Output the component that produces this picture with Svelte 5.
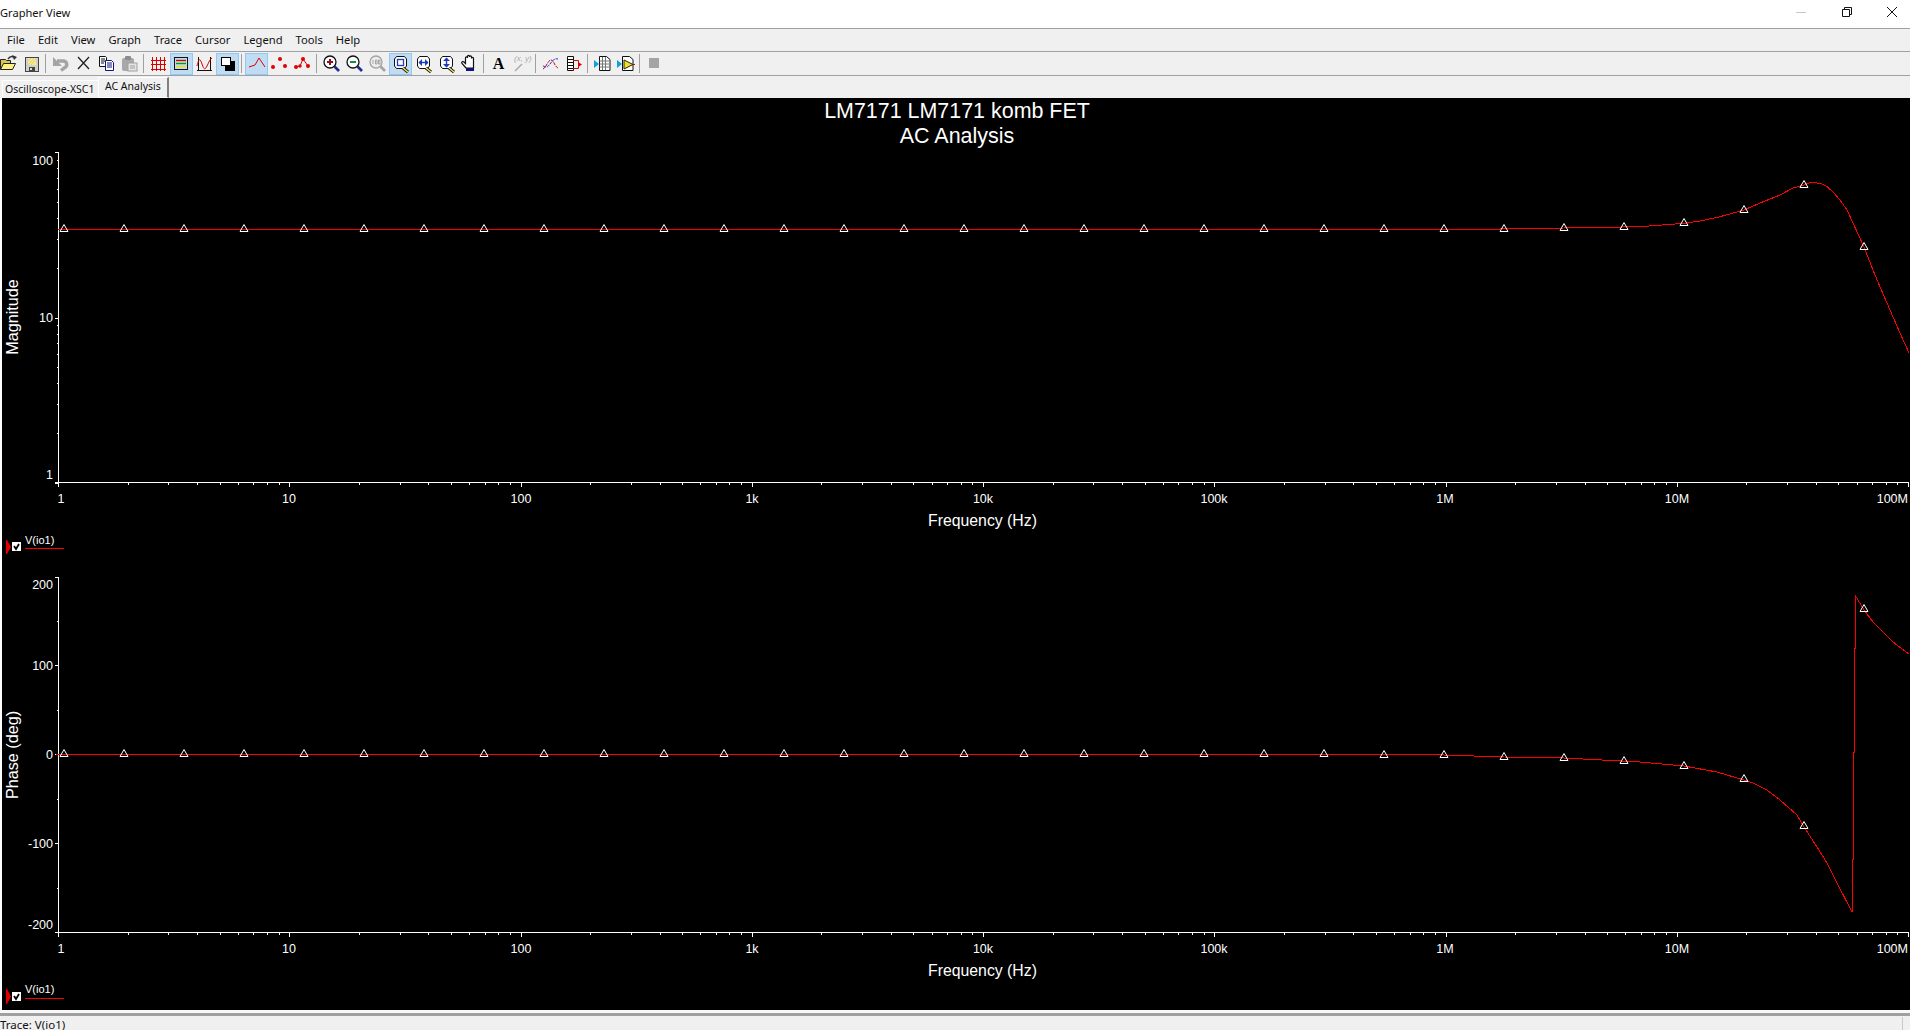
<script>
  const menu = ['File','Edit','View','Graph','Trace','Cursor','Legend','Tools','Help'];
  const X0 = 58, DEC = 231.25;
  const xPos = (v) => X0 + DEC * Math.log10(v);
  const xLabels = [[1,'1',61],[10,'10',289],[100,'100',521],[1e3,'1k',752],[1e4,'10k',983],[1e5,'100k',1214],[1e6,'1M',1445],[1e7,'10M',1677]];
  const xTicks = [];
  for (let d = 0; d < 8; d++) for (let m = 1; m < 10; m++) xTicks.push({ x: Math.round(xPos(m * 10 ** d)), major: m === 1 });
  xTicks.push({ x: 1908, major: true });

  const magY = (v) => 152 + 165.5 * (2 - Math.log10(v));
  const magTicks = [];
  for (const dec of [1, 10]) for (let m = 1; m < 10; m++) magTicks.push({ y: Math.round(magY(m * dec)), major: m === 1 });
  magTicks.push({ y: 152, major: true });

  const markerX = Array.from({ length: 31 }, (_, i) => 64 + 60 * i);
  const magMarkers = markerX.map((x) => {
    const over = { 1564: 228, 1624: 227, 1684: 223, 1744: 210, 1804: 185, 1864: 247 };
    return [x, over[x] ?? 229];
  });
  const phaseMarkers = markerX.map((x) => {
    const over = { 1384: 755, 1444: 755, 1504: 757, 1564: 758, 1624: 761, 1684: 766, 1744: 779, 1804: 826, 1864: 609 };
    return [x, over[x] ?? 754];
  });
  const toPts = (a) => a.map((p) => p.join(',')).join(' ');
  const magCurve = toPts([[58,229],[1500,229],[1564,228],[1640,226.7],[1684,223.3],[1700,221],[1720,216.7],[1744,210],[1760,203],[1780,195],[1793,188],[1804,185],[1810,182.7],[1817,183],[1822,184],[1827,186.7],[1833,192],[1840,200],[1847,210],[1853,223],[1864,247],[1873,270],[1880,287],[1887,303],[1893,317],[1900,333],[1909,353]]);
  const phaseCurve = toPts([[56,754],[1324,754],[1444,755],[1504,757],[1564,758],[1640,762],[1684,766],[1717,772],[1744,780],[1753,783],[1767,790],[1780,800],[1797,815],[1804,827],[1817,847],[1827,863],[1837,883],[1852,912],[1852,859],[1853,859],[1853,752],[1854,752],[1854,648],[1855,648],[1855,595],[1864,610],[1873,622],[1883,632],[1893,642],[1909,654]]);
  const triangle = (x, y) => `${x - 4},${y + 2.5} ${x + 4},${y + 2.5} ${x},${y - 4.5}`;
  const phaseYLabels = [['200',584],['100',665],['0',754],['-100',843],['-200',924]];
</script>

<div class="app">
  <header class="titlebar">
    <span class="title">Grapher View</span>
    <div class="winbtns">
      <svg class="win" viewBox="0 0 46 24"><line x1="18" y1="12.5" x2="28" y2="12.5" stroke="#c6c6c6"/></svg>
      <svg class="win" viewBox="0 0 46 24"><path d="M18.5 9.5h7v7h-7zM20.500 9.500v-2h7v7h-2" fill="none" stroke="#111"/></svg>
      <svg class="win" viewBox="0 0 46 24"><path d="M18 7l10 10M28 7L18 17" fill="none" stroke="#111"/></svg>
    </div>
  </header>

  <nav class="menubar">
    {#each menu as m}<span>{m}</span>{/each}
  </nav>

  <div class="toolbar">
    <!-- open -->
    <svg class="ic" viewBox="0 0 23 22"><path d="M3.500 16.500v-10h5l1 1h4v3" fill="#d8c850" stroke="#222"/><path d="M3.500 16.500l3-6h12l-3 6z" fill="#fff080" stroke="#222"/><path d="M11 6c2-3 4-3 6-2" fill="none" stroke="#333" stroke-width="1.500"/><path d="M15 2l5 2-3 3z" fill="#333"/></svg>
    <!-- save -->
    <svg class="ic" viewBox="0 0 23 22"><rect x="5.500" y="4.500" width="13" height="14" fill="#d0d0d0" stroke="#444"/><rect x="8" y="5" width="8" height="7" fill="#ffef70"/><path d="M8 12l6-7M11 12l5-6M8 8l3-3" stroke="#c8c8c8" fill="none"/><rect x="9" y="14" width="6" height="4" fill="#444"/><rect x="10" y="15" width="2" height="2" fill="#ddd"/></svg>
    <i class="sep"></i>
    <!-- undo -->
    <svg class="ic" viewBox="0 0 23 22"><path d="M8 8h6a3.500 3.500 0 0 1 2 6.500l-4 3" fill="none" stroke="#a4a4a4" stroke-width="3.400"/><path d="M4 4v9h9z" fill="#a4a4a4"/></svg>
    <!-- cut -->
    <svg class="ic" viewBox="0 0 23 22"><path d="M6 4l11 12M17 4L6 16" fill="none" stroke="#222" stroke-width="1.300"/></svg>
    <!-- copy -->
    <svg class="ic" viewBox="0 0 23 22"><path d="M4.500 3.500h6l1 1v9h-7z" fill="#fff" stroke="#111"/><path d="M6 6h4M6 8h4M6 10h3" stroke="#111"/><path d="M10.500 7.500h6l2 2v8h-8z" fill="#fff" stroke="#13137a"/><path d="M12 10h5M12 12h5M12 14h5" stroke="#13137a"/></svg>
    <!-- paste -->
    <svg class="ic" viewBox="0 0 23 22"><rect x="4" y="5" width="12" height="13" rx="2" fill="#a8a8a8"/><rect x="7" y="3" width="6" height="4" rx="1" fill="#8c8c8c"/><rect x="10" y="10" width="9" height="8" fill="#e4e4e4" stroke="#a0a0a0"/><path d="M12 13h5M12 15h5" stroke="#a0a0a0"/></svg>
    <i class="sep"></i>
    <!-- grid -->
    <svg class="ic" viewBox="0 0 23 22"><path d="M5.500 4v14M9.500 4v14M13.500 4v14M17.500 4v14M4 7.500h15M4 11.500h15M4 16.500h15" stroke="#d80000" fill="none"/></svg>
    <!-- legend -->
    <span class="on"><svg class="ic" viewBox="0 0 23 22"><rect x="4.500" y="4.500" width="13" height="12" fill="none" stroke="#111"/><path d="M6 7.500h10" stroke="#d80000" stroke-width="1.400"/><path d="M6 10.500h10" stroke="#00a000" stroke-width="1.400"/><path d="M6 13.500h10" stroke="#f0e000" stroke-width="1.400"/></svg></span>
    <!-- cursors -->
    <svg class="ic" viewBox="0 0 23 22"><path d="M5.500 4v14M17.500 4v14M4 17.500h15" stroke="#111" fill="none"/><path d="M4 13c2-8 3-8 5-2s3 6 5 2 3-7 5-8" fill="none" stroke="#d80000"/></svg>
    <!-- b/w -->
    <span class="on"><svg class="ic" viewBox="0 0 23 22"><rect x="9" y="8" width="10" height="10" fill="#000"/><rect x="5.500" y="4.500" width="9" height="8" fill="#fff" stroke="#000"/></svg></span>
    <i class="sep"></i>
    <!-- line -->
    <span class="on"><svg class="ic" viewBox="0 0 23 22"><polyline points="4,14 10,12 14,5 20,14" fill="none" stroke="#e00000"/></svg></span>
    <!-- points -->
    <svg class="ic" viewBox="0 0 23 22"><g fill="#e00000"><circle cx="5" cy="14" r="2"/><circle cx="12" cy="6" r="2"/><circle cx="17" cy="13" r="2"/></g></svg>
    <!-- line + points -->
    <svg class="ic" viewBox="0 0 23 22"><polyline points="5,14 9,13 12,6 17,13" fill="none" stroke="#e00000"/><g fill="#e00000"><circle cx="5" cy="14" r="2"/><circle cx="9" cy="13" r="1.700"/><circle cx="12" cy="6" r="2"/><circle cx="17" cy="13" r="2"/></g></svg>
    <i class="sep"></i>
    <!-- zoom in -->
    <svg class="ic" viewBox="0 0 23 22"><circle cx="10" cy="9" r="6" fill="#fff" stroke="#111" stroke-width="1.300"/><path d="M7 9h6M10 6v6" stroke="#8c1020" stroke-width="2"/><path d="M14.500 13.500l4.500 4.500" stroke="#1c2c90" stroke-width="2.600"/></svg>
    <!-- zoom out -->
    <svg class="ic" viewBox="0 0 23 22"><circle cx="10" cy="9" r="6" fill="#fff" stroke="#111" stroke-width="1.300"/><path d="M7 9h6" stroke="#109040" stroke-width="2"/><path d="M14.500 13.500l4.500 4.500" stroke="#1c2c90" stroke-width="2.600"/></svg>
    <!-- zoom full -->
    <svg class="ic" viewBox="0 0 23 22"><circle cx="10" cy="9" r="6" fill="#eee" stroke="#a4a4a4" stroke-width="1.300"/><path d="M7 7v4M9.500 7h1.500v4H9.500zM12.500 7h1.500v4h-1.500z" fill="none" stroke="#a4a4a4"/><path d="M14.500 13.500l4.500 4.500" stroke="#a4a4a4" stroke-width="2.600"/></svg>
    <!-- zoom box -->
    <span class="on"><svg class="ic" viewBox="0 0 23 22"><path d="M5.500 6l2-2.500h8l2 2.500v7l-2 2.500h-8l-2-2.500z" fill="#fff" stroke="#111"/><rect x="8.500" y="6.500" width="6" height="6" fill="none" stroke="#1c3cc0" stroke-width="1.300"/><path d="M14 15l5 4" stroke="#111" stroke-width="3"/><path d="M14 15l5 4" stroke="#f2e060" stroke-width="1.600"/></svg></span>
    <!-- zoom x -->
    <svg class="ic" viewBox="0 0 23 22"><path d="M5.500 6l2-2.500h8l2 2.500v7l-2 2.500h-8l-2-2.500z" fill="#fff" stroke="#111"/><path d="M7 9.500h9" stroke="#1c3cc0" stroke-width="1.400"/><path d="M10 6v7l-3.500-3.500zM13 6v7l3.500-3.500z" fill="#1c3cc0"/><path d="M14 15l5 4" stroke="#111" stroke-width="3"/><path d="M14 15l5 4" stroke="#f2e060" stroke-width="1.600"/></svg>
    <!-- zoom y -->
    <svg class="ic" viewBox="0 0 23 22"><path d="M5.500 6l2-2.500h8l2 2.500v7l-2 2.500h-8l-2-2.500z" fill="#fff" stroke="#111"/><path d="M11.500 5v9" stroke="#1c3cc0" stroke-width="1.400"/><path d="M8 8h7l-3.500-3.500zM8 11h7l-3.500 3.500z" fill="#1c3cc0"/><path d="M14 15l5 4" stroke="#111" stroke-width="3"/><path d="M14 15l5 4" stroke="#f2e060" stroke-width="1.600"/></svg>
    <!-- hand -->
    <svg class="ic" viewBox="0 0 23 22"><path d="M8 15L4 10.500c-1-1.500 1-2.500 2-1.500L7.500 10.500V5c0-1.500 2-1.500 2 0V3.500c0-1.500 2-1.500 2 0V4c0-1.500 2-1.500 2 0V5.500c0-1.500 2-1.500 2 0V15z" fill="#fff" stroke="#111" stroke-width="1.200"/><rect x="8" y="15" width="8" height="3" fill="#13137a"/></svg>
    <i class="sep"></i>
    <!-- text -->
    <span class="glyph">A</span>
    <!-- x,y -->
    <svg class="ic" viewBox="0 0 23 22"><text x="4" y="8" class="xy">(x, y)</text><path d="M5 18l7-7" stroke="#a8a8a8" stroke-width="1.400"/></svg>
    <i class="sep"></i>
    <!-- overlay curves -->
    <svg class="ic" viewBox="0 0 23 22"><path d="M4 16c3-1 5-9 8-9s3 6 7 8" fill="none" stroke="#d00000" stroke-dasharray="3 1"/><path d="M4 13c4 1 4 2 7-2s5-6 8-5" fill="none" stroke="#1030d0" stroke-dasharray="3 1"/></svg>
    <!-- ports -->
    <svg class="ic" viewBox="0 0 23 22"><path d="M5.500 3.500h6v14h-6z" fill="#fff" stroke="#111"/><path d="M6 6.500h5M6 9.500h5M6 12.500h5M6 15.500h5" stroke="#111"/><path d="M11 7.500h5.500v8H11" fill="none" stroke="#e00000"/><path d="M16 9l4 2.500-4 2.500z" fill="#e00000"/></svg>
    <i class="sep"></i>
    <!-- to sheet -->
    <svg class="ic" viewBox="0 0 23 22"><path d="M8.500 3.500h7l3.500 3v11H8.500z" fill="#fff" stroke="#111"/><path d="M8.500 8h10M8.500 11h10M8.500 14h10M11.500 4v13M14.500 4v13" stroke="#777" fill="none"/><path d="M3 7v8l5-4z" fill="#10a0d8"/></svg>
    <!-- to LV -->
    <svg class="ic" viewBox="0 0 23 22"><path d="M8.500 3.500h7l3.500 3v11H8.500z" fill="#fff" stroke="#111"/><path d="M10 7v9l9-4.500z" fill="#f0e020" stroke="#222"/><path d="M19 11.500h2" stroke="#e00000"/><path d="M3 7v8l5-4z" fill="#10a0d8"/></svg>
    <i class="sep"></i>
    <!-- stop -->
    <svg class="ic" viewBox="0 0 23 22"><rect x="6" y="5" width="10" height="10" fill="#a4a4a4"/></svg>
  </div>

  <div class="tabs">
    <span class="tab">Oscilloscope-XSC1</span>
    <span class="tab active">AC Analysis</span>
  </div>

  <main class="graph">
    <svg class="plot" viewBox="2 98 1908 912">
      <text class="title1" x="957" y="118">LM7171 LM7171 komb FET</text>
      <text class="title1" x="957" y="143">AC Analysis</text>

      <!-- magnitude -->
      <g class="axis">
        <path d="M58.500 152v333M55 152.500h4M55 482.500h1854"/>
        {#each magTicks as t}<line x1={t.major ? 55 : 57} x2="58" y1={t.y + 0.5} y2={t.y + 0.5}/>{/each}
        {#each xTicks as t}<line x1={t.x + 0.5} x2={t.x + 0.5} y1="482" y2={t.major ? 487 : 485}/>{/each}
      </g>
      <text class="lab end" x="53" y="164.500">100</text>
      <text class="lab end" x="53" y="322">10</text>
      <text class="lab end" x="53" y="479">1</text>
      {#each xLabels as l}<text class="lab mid" x={l[2]} y="503">{l[1]}</text>{/each}
      <text class="lab end" x="1908" y="503">100M</text>
      <text class="axt mid" x="982.500" y="526">Frequency (Hz)</text>
      <text class="axv mid" transform="translate(18 317) rotate(-90)">Magnitude</text>
      <polyline class="curve" points={magCurve}/>
      {#each magMarkers as m}<polygon class="mark" points={triangle(m[0], m[1])}/>{/each}

      <path class="redm" d="M6 540h1l4 7-4 7h-1z"/>
      <rect x="12" y="542" width="9" height="9" fill="#fff"/>
      <path class="chk" d="M14 546l2 3 3-5"/>
      <text class="leg" x="25" y="544">V(io1)</text>
      <line class="legl" x1="25" x2="64" y1="548.500" y2="548.500"/>

      <!-- phase -->
      <g class="axis">
        <path d="M58.500 577v358M55 577.500h4M55 932.500h1854"/>
        {#each [665,754,843] as y}<line x1="55" x2="58" y1={y + 0.5} y2={y + 0.5}/>{/each}
        {#each [621,710,799,888] as y}<line x1="57" x2="58" y1={y + 0.5} y2={y + 0.5}/>{/each}
        {#each xTicks as t}<line x1={t.x + 0.5} x2={t.x + 0.5} y1="932" y2={t.major ? 937 : 935}/>{/each}
      </g>
      {#each phaseYLabels as l}<text class="lab end" x="53" y={l[1] + 4.500}>{l[0]}</text>{/each}
      {#each xLabels as l}<text class="lab mid" x={l[2]} y="953">{l[1]}</text>{/each}
      <text class="lab end" x="1908" y="953">100M</text>
      <text class="axt mid" x="982.500" y="976">Frequency (Hz)</text>
      <text class="axv mid" transform="translate(18 755) rotate(-90)">Phase (deg)</text>
      <polyline class="curve" points={phaseCurve}/>
      {#each phaseMarkers as m}<polygon class="mark" points={triangle(m[0], m[1])}/>{/each}

      <path class="redm" d="M6 989h1l4 7.500-4 7.500h-1z"/>
      <rect x="12" y="992" width="9" height="9" fill="#fff"/>
      <path class="chk" d="M14 996l2 3 3-5"/>
      <text class="leg" x="25" y="993">V(io1)</text>
      <line class="legl" x1="25" x2="64" y1="998.500" y2="998.500"/>
    </svg>
  </main>

  <div class="foot"></div>
  <footer class="status"><span>Trace: V(io1)</span></footer>
</div>

<style>
  :global(body) { margin: 0; background: #f0f0f0; overflow: hidden; }
  .app {
    width: 1910px; height: 1030px; display: flex; flex-direction: column; overflow: hidden;
    font-family: "Noto Sans", "Liberation Sans", sans-serif; font-size: 12px; color: #111;
    background: #f0f0f0;
  }
  .titlebar {
    height: 28px; flex: none; background: #fff; border-bottom: 1px solid #a0a0a0;
    display: flex; align-items: center; justify-content: space-between;
  }
  .title { font-size: 11.1px; margin-top: -4px; }
  .winbtns { display: flex; margin-right: -5px; margin-top: -4px; }
  .win { width: 46px; height: 24px; display: block; }
  .win + .win { margin-left: -0.500px; }
  .menubar {
    height: 22px; flex: none; border-bottom: 1px solid #a0a0a0; box-sizing: content-box;
    display: flex; align-items: center; gap: 13px; padding-left: 7px; font-size: 11.2px;
  }
  .menubar span { margin-top: -2px; }
  .toolbar {
    height: 23px; flex: none; border-bottom: 1px solid #a0a0a0;
    display: flex; align-items: center; margin-left: -3px; width: 1913px;
  }
  .ic { width: 23px; height: 22px; display: block; flex: none; }
  .on {
    width: 23px; height: 22px; box-sizing: border-box; flex: none;
    background: #c0dcf3; box-shadow: inset 0 0 0 1px #90c8f6; display: block;
  }
  .sep { width: 6px; height: 19px; flex: none; display: block; }
  .sep::after { content: ""; display: block; width: 1px; height: 19px; margin-left: 2px; background: #a0a0a0; }
  .glyph {
    width: 23px; height: 22px; flex: none; text-align: center;
    font: bold 16px/22px "Liberation Serif", serif; color: #000;
  }
  .xy { font: italic 8px "Liberation Sans", sans-serif; fill: #a8a8a8; }
  .tabs { height: 22px; flex: none; display: flex; align-items: flex-end; font-size: 10.5px; padding-left: 2px; }
  .tab {
    height: 18px; width: 96px; box-sizing: border-box; padding-left: 2px; line-height: 16px;
    border-top: 1px solid #fff; border-left: 1px solid #fff; white-space: nowrap; background: #f0f0f0;
  }
  .tab.active {
    height: 21px; width: 71px; padding-left: 6px; line-height: 17px;
    border-right: 2px solid #808080; border-bottom: 1px solid #fff;
  }
  .graph { height: 912px; flex: none; padding-left: 2px; background: #fff; box-sizing: border-box; }
  .plot { width: 1908px; height: 912px; display: block; background: #000; }
  .foot { height: 6px; flex: none; background: #f8f8f8; box-sizing: border-box; border-bottom: 3px solid #a0a0a0; }
  .status { height: 14px; flex: none; overflow: hidden; position: relative; }
  .status span { display: block; font-size: 11.5px; line-height: 10px; margin-top: 4px; }
  .status::after { content: ""; position: absolute; left: 1902px; top: 1px; width: 1px; height: 14px; background: #c8c8c8; }
  .title1 { font: 21.450px "Liberation Sans", Arial, sans-serif; fill: #fff; text-anchor: middle; }
  .lab { font: 12.500px "Liberation Sans", Arial, sans-serif; fill: #fff; }
  .axt { font: 15.800px "Liberation Sans", Arial, sans-serif; fill: #fff; }
  .axv { font: 16.200px "Liberation Sans", Arial, sans-serif; fill: #fff; }
  .leg { font: 11px "Liberation Sans", Arial, sans-serif; fill: #fff; }
  .end { text-anchor: end; }
  .mid { text-anchor: middle; }
  .axis { shape-rendering: crispEdges; }
  .axis path, .axis line { stroke: #fff; stroke-width: 1; fill: none; }
  .curve { fill: none; stroke: #f00; stroke-width: 1; shape-rendering: crispEdges; }
  .mark { fill: none; stroke: #fff; stroke-width: 1; }
  .redm { fill: #e00000; }
  .chk { fill: none; stroke: #000; stroke-width: 1.800; }
  .legl { stroke: #f00; stroke-width: 1; shape-rendering: crispEdges; }
</style>
